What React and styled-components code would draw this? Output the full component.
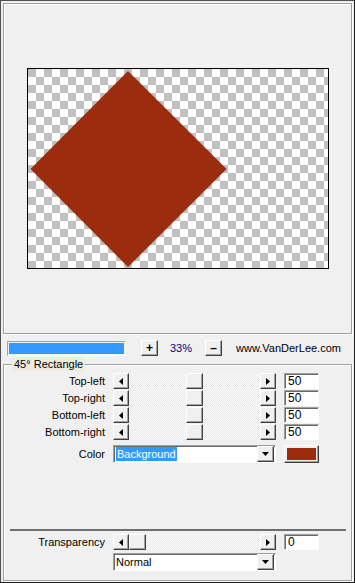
import React from "react";
import styled, { createGlobalStyle, css } from "styled-components";

const Global = createGlobalStyle`
  html, body { margin: 0; padding: 0; background: #f0f0f0; }
  body { font-family: "Liberation Sans", Arial, sans-serif; font-size: 11px; color: #000; }
`;

const raised = css`
  box-sizing: border-box;
  background: #f0f0f0;
  border-style: solid;
  border-width: 1px;
  border-color: #ffffff #404040 #404040 #ffffff;
  box-shadow: inset -1px -1px 0 #a0a0a0;
`;

const sunken = css`
  box-sizing: border-box;
  border-style: solid;
  border-width: 1px;
  border-color: #a0a0a0 #ffffff #ffffff #a0a0a0;
  box-shadow: inset 1px 1px 0 #696969;
`;

const Window = styled.div`
  box-sizing: border-box;
  width: 355px;
  height: 583px;
  border: 1px solid #1a1a1a;
  border-top-color: #505050;
  border-left-color: #505050;
  padding: 2px 2px 1px 2px;
  display: flex;
  flex-direction: column;
  background: #f0f0f0;
`;

const PreviewPanel = styled.div`
  box-sizing: border-box;
  height: 331px;
  border: 1px solid #a0a0a0;
  box-shadow: inset 1px 1px 0 #ffffff, 1px 1px 0 #ffffff;
  display: flex;
  align-items: center;
  justify-content: center;
`;

const Canvas = styled.div`
  box-sizing: border-box;
  width: 302px;
  height: 201px;
  border: 1px solid #000;
  background-color: #fff;
  background-image: conic-gradient(#ffffff 25%, #c0c0c0 0 50%, #ffffff 0 75%, #c0c0c0 0);
  background-size: 16px 16px;
  display: flex;
`;

const Toolbar = styled.div`
  display: flex;
  align-items: center;
  height: 16px;
  margin-top: 6px;
  padding-left: 4px;
`;

const Progress = styled.div`
  box-sizing: border-box;
  width: 119px;
  height: 15px;
  padding: 1px;
  background: #f0f0f0;
  border: 1px solid;
  border-color: #a0a0a0 #ffffff #ffffff #a0a0a0;
`;

const ProgressFill = styled.div`
  height: 100%;
  background: #3399ff;
`;

const SmallButton = styled.div`
  ${raised};
  width: 17px;
  height: 16px;
  margin-left: ${(p) => p.$ml || 0}px;
  display: flex;
  align-items: center;
  justify-content: center;
  font-size: 12px;
  font-weight: bold;
  line-height: 1;
`;

const Zoom = styled.span`
  width: 47px;
  padding-left: 12px;
  box-sizing: border-box;
  color: #000080;
  font-size: 11px;
`;

const Url = styled.span`
  margin-left: 14px;
  font-size: 11px;
  color: #000;
`;

const Group = styled.div`
  position: relative;
  flex: 1;
  margin-top: 8px;
  box-sizing: border-box;
  border: 1px solid #a0a0a0;
  box-shadow: inset 1px 1px 0 #ffffff, 1px 1px 0 #ffffff;
  padding-top: 8px;
  display: flex;
  flex-direction: column;
`;

const Legend = styled.span`
  position: absolute;
  left: 8px;
  top: -7px;
  padding: 0 2px;
  background: #eeebe1;
  line-height: 13px;
  font-size: 11px;
`;

const Grid = styled.div`
  display: grid;
  grid-template-columns: 101px 163px 35px;
  column-gap: 8px;
  row-gap: 1px;
  align-items: center;
`;

const Label = styled.div`
  text-align: right;
  height: 16px;
  line-height: 16px;
  white-space: nowrap;
`;

const SliderBox = styled.div`
  display: flex;
  height: 16px;
`;

const Track = styled.div`
  flex: 1;
  display: flex;
  background-color: #f7f7f7;
  background-image: repeating-conic-gradient(#ffffff 0 25%, #e6e6e6 0 50%);
  background-size: 2px 2px;
`;

const Thumb = styled.div`
  ${raised};
  width: 17px;
  height: 16px;
`;

const ArrowButton = styled.div`
  ${raised};
  width: 16px;
  height: 16px;
  display: flex;
  align-items: center;
  justify-content: center;
`;

const NumberField = styled.div`
  ${sunken};
  background: #fff;
  height: 16px;
  line-height: 14px;
  padding-left: 3px;
  font-size: 12px;
`;

const ColorRow = styled(Grid)`
  margin-top: 5px;
`;

const Select = styled.div`
  ${sunken};
  background: #fff;
  height: 18px;
  display: flex;
  align-items: center;
  padding: 1px 1px 1px 2px;
`;

const SelectText = styled.span`
  flex: 1;
  display: flex;
  align-items: center;
  height: 100%;
  font-size: 11px;
`;

const Highlight = styled.span`
  background: #3399ff;
  color: #fff;
  padding: 0 1px;
  line-height: 14px;
`;

const DropButton = styled(ArrowButton)`
  width: 17px;
  height: 16px;
`;

const Swatch = styled.div`
  ${raised};
  height: 18px;
  padding: 2px;
  display: flex;
`;

const SwatchFill = styled.div`
  flex: 1;
  background: ${(p) => p.$color};
`;

const Separator = styled.div`
  height: 2px;
  background: #6f6f6f;
  margin: 66px 5px 3px 6px;
`;

const BottomRows = styled(Grid)`
  row-gap: 3px;
`;

const SelectWide = styled(Select)`
  grid-column: 2;
`;

const LeftTri = () => (
  <svg width="4" height="7" viewBox="0 0 4 7">
    <polygon points="4,0 0,3.5 4,7" fill="#000" />
  </svg>
);
const RightTri = () => (
  <svg width="4" height="7" viewBox="0 0 4 7">
    <polygon points="0,0 4,3.5 0,7" fill="#000" />
  </svg>
);
const DownTri = () => (
  <svg width="7" height="4" viewBox="0 0 7 4">
    <polygon points="0,0 7,0 3.5,4" fill="#000" />
  </svg>
);

const Slider = ({ offset }) => (
  <SliderBox>
    <ArrowButton>
      <LeftTri />
    </ArrowButton>
    <Track>
      <Thumb style={{ marginLeft: offset }} />
    </Track>
    <ArrowButton>
      <RightTri />
    </ArrowButton>
  </SliderBox>
);

const rows = ["Top-left", "Top-right", "Bottom-left", "Bottom-right"];

export default function App() {
  return (
    <>
      <Global />
      <Window>
        <PreviewPanel>
          <Canvas>
            <svg width="300" height="199" viewBox="0 0 300 199">
              <polygon points="100,2 198.5,100 100,198 2.5,100" fill="#9b2c0e" />
            </svg>
          </Canvas>
        </PreviewPanel>
        <Toolbar>
          <Progress>
            <ProgressFill />
          </Progress>
          <SmallButton $ml={15}>+</SmallButton>
          <Zoom>33%</Zoom>
          <SmallButton>–</SmallButton>
          <Url>www.VanDerLee.com</Url>
        </Toolbar>
        <Group>
          <Legend>45° Rectangle</Legend>
          <Grid>
            {rows.map((r) => (
              <React.Fragment key={r}>
                <Label>{r}</Label>
                <Slider offset={57} />
                <NumberField>50</NumberField>
              </React.Fragment>
            ))}
          </Grid>
          <ColorRow>
            <Label>Color</Label>
            <Select>
              <SelectText>
                <Highlight>Background</Highlight>
              </SelectText>
              <DropButton>
                <DownTri />
              </DropButton>
            </Select>
            <Swatch>
              <SwatchFill $color="#9b2c0e" />
            </Swatch>
          </ColorRow>
          <Separator />
          <BottomRows>
            <Label>Transparency</Label>
            <Slider offset={0} />
            <NumberField>0</NumberField>
            <SelectWide>
              <SelectText>Normal</SelectText>
              <DropButton>
                <DownTri />
              </DropButton>
            </SelectWide>
          </BottomRows>
        </Group>
      </Window>
    </>
  );
}
